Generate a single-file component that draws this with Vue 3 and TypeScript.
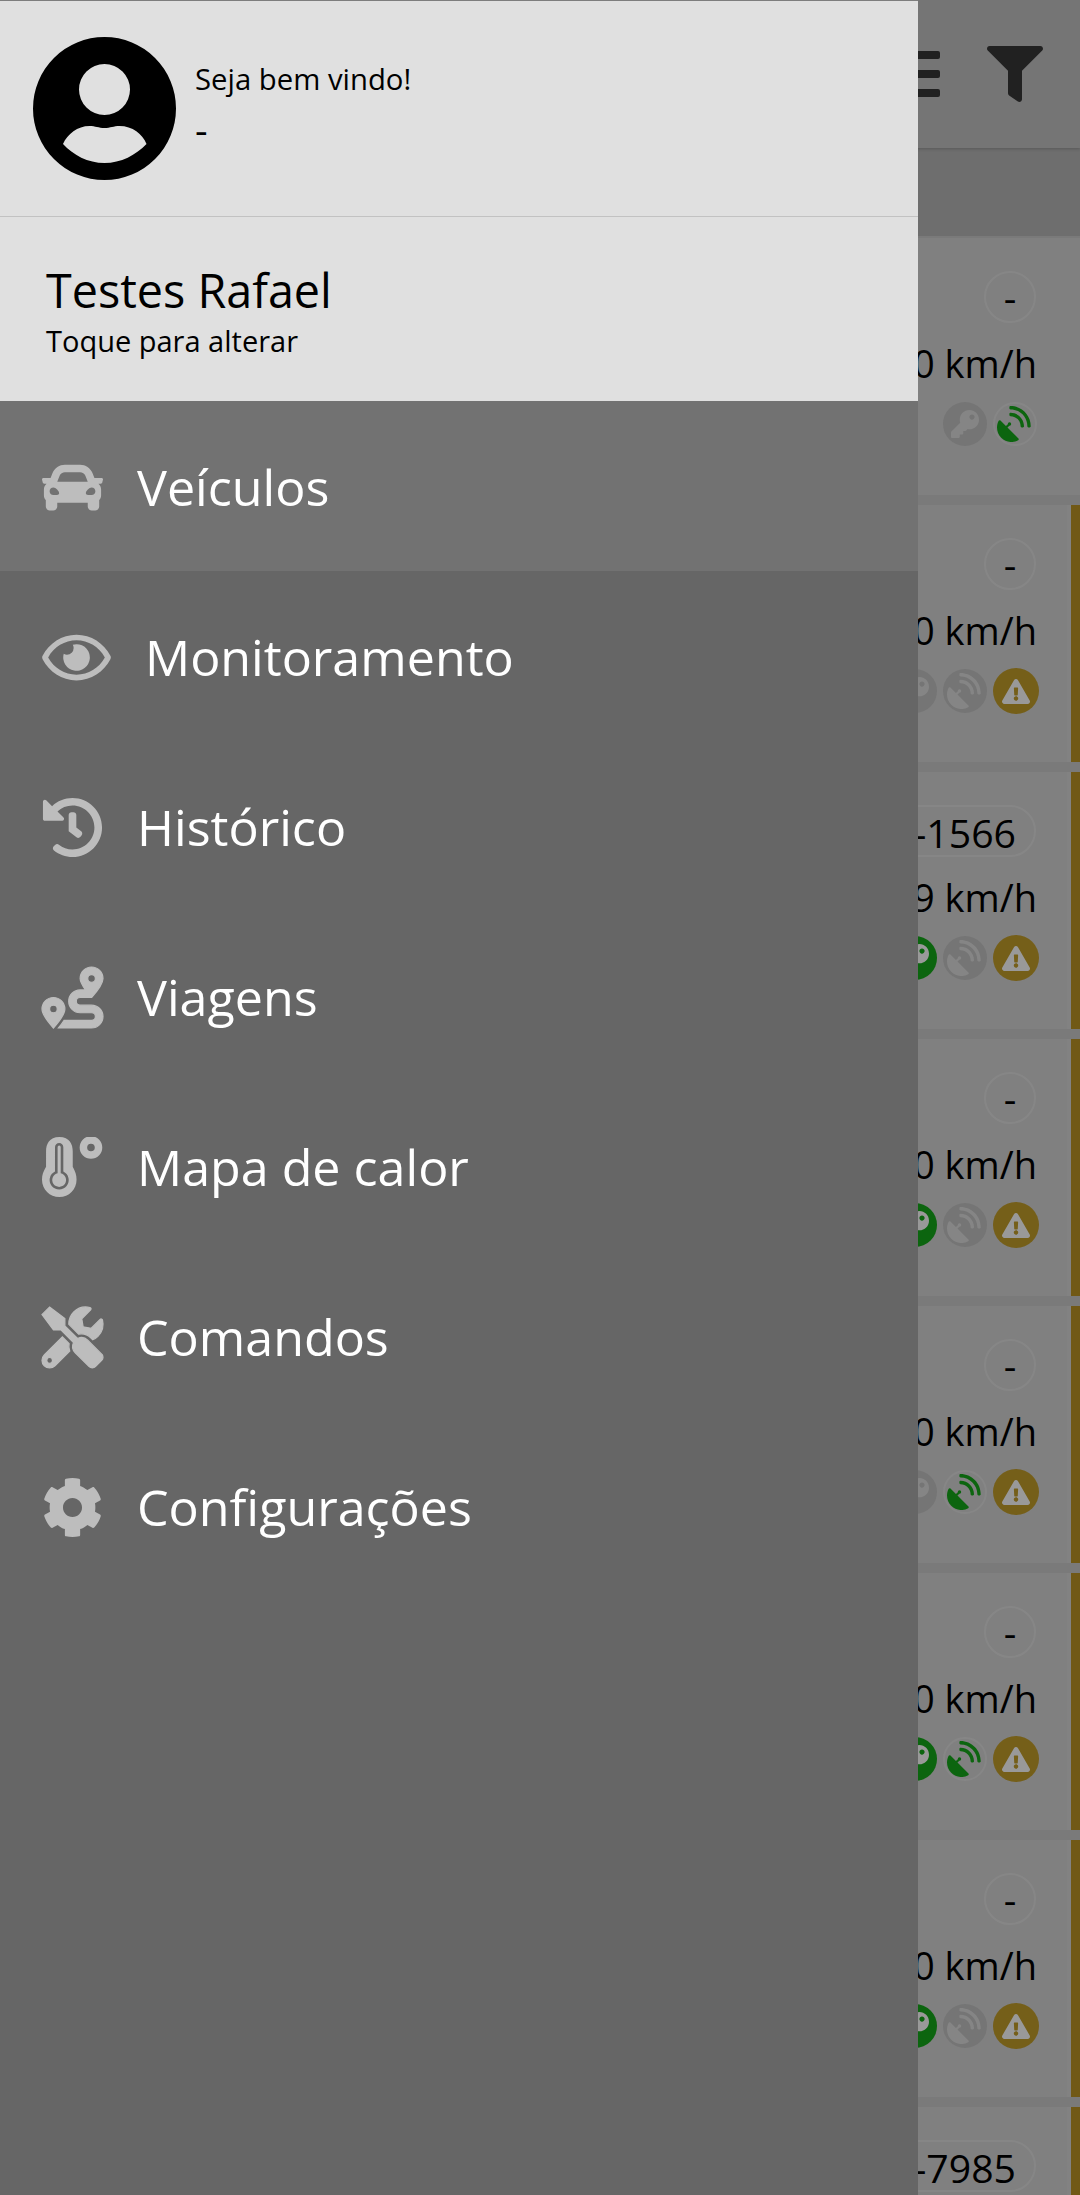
<script setup lang="ts">
interface Vehicle {
  plate: string
  speed: string
  key: boolean
  sat: boolean
  warn: boolean
  bar: boolean
}

const vehicles: Vehicle[] = [
  { plate: '-', speed: '0 km/h', key: false, sat: true, warn: false, bar: false },
  { plate: '-', speed: '0 km/h', key: false, sat: false, warn: true, bar: true },
  { plate: '-1566', speed: '9 km/h', key: true, sat: false, warn: true, bar: true },
  { plate: '-', speed: '0 km/h', key: true, sat: false, warn: true, bar: true },
  { plate: '-', speed: '0 km/h', key: false, sat: true, warn: true, bar: true },
  { plate: '-', speed: '0 km/h', key: true, sat: true, warn: true, bar: true },
  { plate: '-', speed: '0 km/h', key: true, sat: false, warn: true, bar: true },
  { plate: '-7985', speed: '0 km/h', key: true, sat: false, warn: true, bar: true },
]

const menu = [
  { label: 'Veículos', box: '0 0 512 512', cls: '', active: true, d: 'M499.99 176h-59.87l-16.64-41.6C406.38 91.63 365.57 64 319.5 64h-127c-46.06 0-86.88 27.63-103.99 70.4L71.87 176H12.01C4.2 176-1.53 183.34.37 190.91l6 24C7.7 220.25 12.5 224 18.01 224h20.07C24.65 235.73 16 252.78 16 272v48c0 16.12 6.16 30.67 16 41.93V416c0 17.67 14.33 32 32 32h32c17.67 0 32-14.33 32-32v-32h256v32c0 17.67 14.33 32 32 32h32c17.67 0 32-14.33 32-32v-54.07c9.84-11.25 16-25.8 16-41.93v-48c0-19.22-8.65-36.27-22.07-48H494c5.51 0 10.31-3.75 11.64-9.09l6-24c1.89-7.57-3.84-14.91-11.65-14.91zm-352.06-17.83c7.29-18.22 24.94-30.17 44.57-30.17h127c19.63 0 37.28 11.95 44.57 30.17L384 208H128l19.93-49.83zM96 319.8c-19.2 0-32-12.76-32-31.9S76.8 256 96 256s48 28.71 48 47.85-28.8 15.95-48 15.95zm320 0c-19.2 0-48 3.19-48-15.95S396.8 256 416 256s32 12.76 32 31.9-12.8 31.9-32 31.9z' },
  { label: 'Monitoramento', box: '0 0 576 512', cls: 'eye', active: false, d: 'M288 144a110.94 110.94 0 0 0-31.24 5 55.4 55.4 0 0 1 7.24 27 56 56 0 0 1-56 56 55.4 55.4 0 0 1-27-7.24A111.71 111.71 0 1 0 288 144zm284.52 97.4C518.29 135.59 410.93 64 288 64S57.68 135.64 3.48 241.41a32.35 32.35 0 0 0 0 29.19C57.71 376.41 165.07 448 288 448s230.32-71.64 284.52-177.41a32.35 32.35 0 0 0 0-29.19zM288 400c-98.65 0-189.09-55-237.93-144C98.91 167 189.34 112 288 112s189.09 55 237.93 144C477.1 345 386.66 400 288 400z' },
  { label: 'Histórico', box: '0 0 512 512', cls: '', active: false, d: 'M504 255.531c.253 136.64-111.18 248.372-247.82 248.468-59.015.042-113.223-20.53-155.822-54.911-11.077-8.94-11.905-25.541-1.839-35.607l11.267-11.267c8.609-8.609 22.353-9.551 31.891-1.984C173.062 425.135 212.781 440 256 440c101.705 0 184-82.311 184-184 0-101.705-82.311-184-184-184-48.814 0-93.149 18.969-126.068 49.932l50.754 50.754c10.08 10.08 2.941 27.314-11.313 27.314H24c-8.837 0-16-7.163-16-16V38.627c0-14.254 17.234-21.393 27.314-11.314l49.372 49.372C129.209 34.136 189.552 8 256 8c136.81 0 247.747 110.78 248 247.531zm-180.912 78.784l9.823-12.63c8.138-10.463 6.253-25.542-4.21-33.679L288 256.349V152c0-13.255-10.745-24-24-24h-16c-13.255 0-24 10.745-24 24v135.651l65.409 50.874c10.463 8.137 25.541 6.253 33.679-4.21z' },
  { label: 'Viagens', box: '0 0 512 512', cls: 'heavy', active: false, d: 'M416 320h-96c-17.6 0-32-14.4-32-32s14.4-32 32-32h96s96-107 96-160-43-96-96-96-96 43-96 96c0 25.5 22.2 63.4 45.3 96H320c-52.9 0-96 43.1-96 96s43.1 96 96 96h96c17.6 0 32 14.4 32 32s-14.4 32-32 32H185.5c-16 24.8-33.8 47.7-47.3 64H416c52.9 0 96-43.1 96-96s-43.1-96-96-96zm0-256c17.7 0 32 14.3 32 32s-14.3 32-32 32-32-14.3-32-32 14.3-32 32-32zM96 256c-53 0-96 43-96 96s96 160 96 160 96-107 96-160-43-96-96-96zm0 128c-17.7 0-32-14.3-32-32s14.3-32 32-32 32 14.3 32 32-14.3 32-32 32z' },
  { label: 'Mapa de calor', box: '0 0 512 512', cls: '', active: false, d: 'M146 0C60 0 34 60 34 120V250C10 290 0 320 0 358C0 438 65 504 146 504C226 504 290 438 290 358C290 320 280 290 258 250V120C258 60 232 0 146 0zM109 85a35 35 0 0 1 70 0V289A80 80 0 1 1 109 289zM131 85V304.500A58 58 0 1 0 157 304.500V85a13 13 0 0 0-26 0zM411 -7a95 95 0 1 1 0 190a95 95 0 1 1 0-190zM411 56a32 32 0 1 0 0 64a32 32 0 1 0 0-64z' },
  { label: 'Comandos', box: '0 0 512 512', cls: 'heavy', active: false, d: 'M501.1 395.7L384 278.6c-23.1-23.1-57.6-27.6-85.4-13.9L192 158.1V96L64 0 0 64l96 128h62.1l106.6 106.6c-13.6 27.8-9.2 62.3 13.9 85.4l117.1 117.1c14.6 14.6 38.2 14.6 52.7 0l52.7-52.7c14.5-14.6 14.5-38.2-.1-52.7zM331.7 225c28.3 0 54.9 11 74.9 31l19.4 19.4c15.8-6.9 30.8-16.5 43.8-29.5 37.1-37.1 49.7-89.3 37.9-136.7-2.2-9-13.5-12.1-20.1-5.5l-74.4 74.4-67.9-11.3L334 98.9l74.4-74.4c6.6-6.6 3.4-17.9-5.7-20.2-47.4-11.7-99.6.9-136.6 37.9-28.5 28.5-41.9 66.1-41.2 103.6l82.1 82.1c8.1-1.9 16.5-2.9 24.7-2.9zm-103.9 82l-56.7-56.7L18.7 402.8c-25 25-25 65.5 0 90.5s65.5 25 90.5 0l123.6-123.6c-7.6-19.9-9.9-41.6-5-62.7zM64 472c-13.2 0-24-10.8-24-24 0-13.3 10.7-24 24-24s24 10.7 24 24c0 13.2-10.7 24-24 24z' },
  { label: 'Configurações', box: '0 0 512 512', cls: '', active: false, d: 'M487.4 315.7l-42.6-24.6c4.3-23.2 4.3-47 0-70.2l42.6-24.6c4.9-2.8 7.1-8.6 5.5-14-11.1-35.6-30-67.8-54.7-94.6-3.8-4.1-10-5.1-14.8-2.3L380.8 110c-17.9-15.4-38.5-27.3-60.8-35.1V25.8c0-5.6-3.9-10.5-9.4-11.7-36.7-8.2-74.3-7.8-109.2 0-5.5 1.2-9.4 6.1-9.4 11.7V75c-22.2 7.9-42.8 19.8-60.8 35.1L88.7 85.5c-4.9-2.8-11-1.9-14.8 2.3-24.7 26.7-43.6 58.9-54.7 94.6-1.7 5.4.6 11.2 5.5 14L67.3 221c-4.3 23.2-4.3 47 0 70.2l-42.6 24.6c-4.9 2.8-7.1 8.6-5.5 14 11.1 35.6 30 67.8 54.7 94.6 3.8 4.1 10 5.1 14.8 2.3l42.6-24.6c17.9 15.4 38.5 27.3 60.8 35.1v49.2c0 5.6 3.9 10.5 9.4 11.7 36.7 8.2 74.3 7.8 109.2 0 5.5-1.2 9.4-6.1 9.4-11.7v-49.2c22.2-7.9 42.8-19.8 60.8-35.1l42.6 24.6c4.9 2.8 11 1.9 14.8-2.3 24.7-26.7 43.6-58.9 54.7-94.6 1.5-5.5-.7-11.3-5.6-14.1zM256 336c-44.1 0-80-35.9-80-80s35.9-80 80-80 80 35.9 80 80-35.9 80-80 80z' },
]

const keyPath = 'M512 176.001C512 273.203 433.202 352 336 352c-11.22 0-22.19-1.062-32.827-3.069l-24.012 27.014A23.999 23.999 0 0 1 261.223 384H224v40c0 13.255-10.745 24-24 24h-40v40c0 13.255-10.745 24-24 24H24c-13.255 0-24-10.745-24-24v-78.059c0-6.365 2.529-12.47 7.029-16.971l161.802-161.802C163.108 213.814 160 195.271 160 176 160 78.798 238.797.001 335.999 0 433.488-.001 512 78.511 512 176.001zM336 128c0 26.51 21.49 48 48 48s48-21.49 48-48-21.49-48-48-48-48 21.49-48 48z'
const dishPath = 'M305 463c7 7 6 20-3 25-78 42-177 30-242-36C-5 386-17 287 24 210c5-9 18-10 25-3l78 78 27-27a24 24 0 1 1 22 22l-27 27 156 156zM192 0c-9 0-16 7-16 16v16c0 9 7 16 16 16 132 0 240 108 240 240 0 9 7 16 16 16h16c9 0 16-7 16-16C480 129 351 0 192 0zm0 96c-9 0-16 7-16 16v16c0 9 7 16 16 16 79 0 144 65 144 144 0 9 7 16 16 16h16c9 0 16-7 16-16 0-106-86-192-192-192z'
const warnPath = 'M569.517 440.013C587.975 472.007 564.806 512 527.94 512H48.054c-36.937 0-59.999-40.055-41.577-71.987L246.423 23.985c18.467-32.009 64.72-31.951 83.154 0l239.94 416.028zM288 354c-25.405 0-46 20.595-46 46s20.595 46 46 46 46-20.595 46-46-20.595-46-46-46zm-43.673-165.346l7.418 136c.347 6.364 5.609 11.346 11.982 11.346h48.546c6.373 0 11.635-4.982 11.982-11.346l7.418-136c.375-6.874-5.098-12.654-11.982-12.654h-63.383c-6.884 0-12.356 5.78-11.981 12.654z'
</script>

<template>
  <div class="page">
    <div class="app">
      <header class="topbar">
        <div class="bars"><span /><span /><span /></div>
        <svg class="filter" viewBox="0 0 512 512">
          <path d="M487.976 0H24.028C2.71 0-8.047 25.866 7.058 40.971L192 225.941V432c0 7.831 3.821 15.17 10.237 19.662l80 55.98C298.02 518.69 320 507.493 320 487.98V225.941l184.947-184.97C520.021 25.896 509.338 0 487.976 0z" />
        </svg>
      </header>
      <div class="subbar" />
      <div class="list">
        <div v-for="(v, i) in vehicles" :key="i" class="card" :class="{ 'has-bar': v.bar }">
          <span class="plate" :class="{ wide: v.plate.length > 1 }">{{ v.plate }}</span>
          <span class="speed">{{ v.speed }}</span>
          <div class="status" :class="{ 'no-warn': !v.warn }">
            <span class="dot" :class="{ green: v.key }">
              <svg viewBox="0 0 512 512" class="dot-key"><path :d="keyPath" /></svg>
            </span>
            <span class="dot" :class="{ 'green-dish': v.sat }">
              <svg viewBox="0 0 512 512" class="dot-dish"><path :d="dishPath" /></svg>
            </span>
            <span v-if="v.warn" class="dot warn">
              <svg viewBox="0 0 576 512" class="dot-warn"><path :d="warnPath" /></svg>
            </span>
          </div>
        </div>
      </div>
    </div>

    <div class="scrim" />

    <aside class="drawer">
      <div class="profile">
        <svg class="avatar" viewBox="0 0 143 143">
          <path fill-rule="evenodd" d="M71.500 0a71.500 71.500 0 1 1 0 143a71.500 71.500 0 1 1 0-143zM71.500 27a25.500 25.500 0 1 0 0 51a25.500 25.500 0 1 0 0-51zM30 107c10 11 25 19 41.500 19s31.500-8 42-19c-4-10-14-18-27-18c-6 0-9 2-15 2s-9-2-15-2c-12 0-22 8-26.500 18z" />
        </svg>
        <div class="welcome">
          <span class="hello">Seja bem vindo!</span>
          <span class="dash">-</span>
        </div>
      </div>
      <div class="account">
        <span class="account-name">Testes Rafael</span>
        <span class="account-hint">Toque para alterar</span>
      </div>
      <nav class="menu">
        <div v-for="item in menu" :key="item.label" class="item" :class="{ active: item.active }">
          <svg class="item-icon" :class="item.cls" :viewBox="item.box" fill-rule="evenodd"><path :d="item.d" /></svg>
          <span class="item-label">{{ item.label }}</span>
        </div>
      </nav>
    </aside>
  </div>
</template>

<style>
html,
body {
  margin: 0;
  padding: 0;
  background: #808080;
}
</style>

<style scoped>
.page {
  position: relative;
  width: 1080px;
  height: 2195px;
  overflow: hidden;
  font-family: "Open Sans", "Noto Sans", sans-serif;
  background: #cbcbcb;
}

.topbar {
  height: 148px;
  box-sizing: border-box;
  background: #c3c3c3;
  display: flex;
  justify-content: flex-end;
  align-items: center;
  padding-right: 37px;
  box-shadow: 0 1px 3px rgba(0, 0, 0, 0.2);
  position: relative;
}

.bars {
  width: 60px;
  margin-right: 47px;
  display: flex;
  flex-direction: column;
  gap: 11px;
}

.bars span {
  height: 8px;
  border-radius: 2px;
  background: #383838;
}

.filter {
  width: 56px;
  height: 56px;
  fill: #383838;
}

.subbar {
  height: 88px;
  background: #b7b7b7;
}

.list {
  padding-top: 2px;
}

.card {
  height: 257px;
  margin-bottom: 10px;
  box-sizing: border-box;
  padding: 33px 44px 0 0;
  background: #d5d5d5;
  display: flex;
  flex-direction: column;
  align-items: flex-end;
  position: relative;
}

.card.has-bar::after {
  content: "";
  position: absolute;
  top: 0;
  right: 0;
  bottom: 0;
  width: 9px;
  background: #bd9525;
  box-shadow: -4px 0 0 #d9d9d9;
}

.plate {
  min-width: 52px;
  height: 52px;
  box-sizing: border-box;
  border: 2px solid #e0e0e0;
  border-radius: 26px;
  text-align: center;
  font-size: 39.2px;
  line-height: 48px;
  color: #000;
}

.plate.wide {
  width: 240px;
  text-align: right;
  padding-right: 18px;
  line-height: 52px;
}

.speed {
  margin-top: 16px;
  margin-right: -1px;
  font-size: 38px;
  line-height: 48px;
  color: #000;
}

.status {
  margin-top: 14px;
  margin-right: -3px;
  height: 46px;
  display: flex;
  align-items: center;
  gap: 6px;
}

.status.no-warn {
  margin-right: -1px;
}

.dot {
  width: 44px;
  height: 44px;
  box-sizing: border-box;
  border-radius: 50%;
  background: #c3c3c3;
  display: flex;
  align-items: center;
  justify-content: center;
}

.dot svg {
  fill: #dedede;
}

.dot-key {
  width: 28px;
  height: 28px;
}

.dot-dish {
  width: 36px;
  height: 36px;
}

.dot.green {
  background: #15a819;
}

.dot.green svg {
  fill: #fff;
}

.dot.green-dish {
  background: #d5d5d5;
  border: 2px solid #e0e0e0;
}

.dot.green-dish svg {
  fill: #15a819;
}

.dot.warn {
  width: 46px;
  height: 46px;
  background: #c39e2b;
}

.dot.warn svg {
  fill: #fff;
}

.dot-warn {
  width: 28px;
  height: 25px;
}

.scrim {
  position: absolute;
  inset: 0;
  background: rgba(0, 0, 0, 0.4);
}

.drawer {
  position: absolute;
  top: 0;
  left: 0;
  bottom: 0;
  width: 918px;
  background: #666666;
  display: flex;
  flex-direction: column;
}

.profile {
  height: 217px;
  box-sizing: border-box;
  background: #e0e0e0;
  border-top: 1px solid #7d7d7d;
  border-bottom: 1px solid #c2c2c2;
  padding-left: 33px;
  display: flex;
  align-items: center;
  color: #000;
}

.avatar {
  width: 143px;
  height: 143px;
  margin-top: -1px;
}

.welcome {
  margin-left: 19px;
  display: flex;
  flex-direction: column;
}

.hello {
  font-size: 29.3px;
  line-height: 40px;
}

.dash {
  font-size: 39.2px;
  line-height: 60px;
}

.account {
  height: 184px;
  box-sizing: border-box;
  background: #e0e0e0;
  padding: 43px 0 0 46px;
  display: flex;
  flex-direction: column;
  color: #000;
}

.account-name {
  font-size: 46.7px;
  line-height: 60px;
}

.account-hint {
  font-size: 29px;
  line-height: 42px;
}

.item {
  height: 170px;
  box-sizing: border-box;
  padding-left: 42px;
  display: flex;
  align-items: center;
}

.item.active {
  background: #727272;
}

.item-icon {
  flex: none;
  width: 61px;
  height: 61px;
  margin-top: 3px;
  fill: #bdbdbd;
}

.item-icon.eye {
  width: 69px;
}

.item-icon.heavy {
  stroke: #bdbdbd;
  stroke-width: 10px;
  overflow: visible;
}

.item-label {
  margin-left: 34px;
  margin-top: 1px;
  font-size: 50.2px;
  line-height: 66px;
  color: #fff;
}
</style>
